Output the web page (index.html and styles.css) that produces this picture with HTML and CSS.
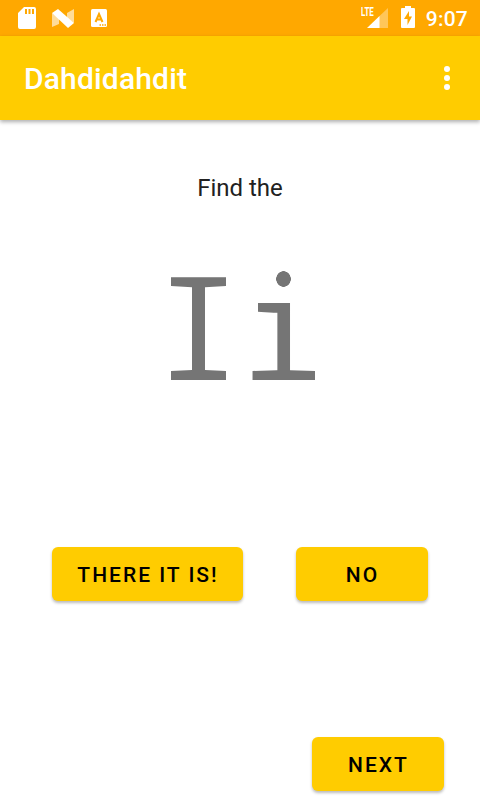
FILE: index.html
```html
<!DOCTYPE html>
<html lang="en">
<head>
<meta charset="utf-8">
<title>Dahdidahdit</title>
<link rel="stylesheet" href="styles.css">
</head>
<body>
<div class="status">
  <svg class="sd" width="18" height="22" viewBox="0 0 18 22"><path fill="#fff" fill-rule="evenodd" d="M6 0H16Q18 0 18 2V20Q18 22 16 22H2Q0 22 0 20V6ZM7 2V7H9V2ZM10.500 2V7H12.500V2ZM14 2V7H16V2Z"/></svg>
  <svg class="nougat" width="22" height="19" viewBox="0 0 22 19"><path fill="#fff" opacity=".6" d="M0 4 7 9V15L0 18ZM22 0V14L15 9V4Z"/><path fill="#fff" d="M0 4 6 0 22 14 16 19Z"/></svg>
  <svg class="keyboard" width="16" height="18" viewBox="0 0 16 18"><rect width="16" height="18" rx="1.500" fill="#fff"/><path fill="none" stroke="#ffa800" stroke-width="2" d="M4.500 13 8 5 11.500 13M5.500 10.500H10.500"/><path stroke="#ffa800" stroke-width="1.500" stroke-dasharray="1.500 1" d="M8.500 16H15"/></svg>
  <span class="space"></span>
  <div class="signal">
    <svg width="21" height="20" viewBox="0 0 21 20"><path fill="#fff" opacity=".35" d="M21 0V20H12V8.500Z"/><path fill="#fff" d="M12.500 8V20H0Z"/></svg>
    <span class="lte">LTE</span>
  </div>
  <svg class="battery" width="14" height="22" viewBox="0 0 14 22"><path fill="#fff" d="M4 0H10V2H13Q14 2 14 3V21Q14 22 13 22H1Q0 22 0 21V3Q0 2 1 2H4Z"/><path fill="#ffa800" d="M8 5 3 13H6.500V19L11 10.500H8Z"/></svg>
  <span class="time">9:07</span>
</div>
<header class="appbar">
  <h1>Dahdidahdit</h1>
  <svg width="6" height="24" viewBox="0 0 6 24" fill="#fff"><circle cx="3" cy="3" r="3"/><circle cx="3" cy="12" r="3"/><circle cx="3" cy="21" r="3"/></svg>
</header>
<main>
  <p class="prompt">Find the</p>
  <div class="letter"><span class="upper">I</span><span class="lower">i</span></div>
  <div class="answers">
    <button class="btn wide">THERE IT IS!</button>
    <button class="btn">NO</button>
  </div>
  <button class="btn next">NEXT</button>
</main>
</body>
</html>
```
FILE: styles.css
```css
* { box-sizing: border-box; }
body {
  margin: 0;
  height: 800px;
  overflow: hidden;
  display: flex;
  flex-direction: column;
  background: #fff;
  font-family: Roboto, "Liberation Sans", sans-serif;
}
svg { display: block; flex: none; }
.status {
  height: 36px;
  flex: none;
  display: flex;
  align-items: flex-start;
  padding: 7px 12px 0 18px;
  background: #ffa800;
  color: #fff;
}
.nougat { margin: 2px 0 0 16px; }
.keyboard { margin: 2px 0 0 17px; }
.space { flex: 1; }
.signal { position: relative; margin: 1px 13px 0 0; }
.lte {
  position: absolute;
  left: -6px;
  top: -2px;
  font-size: 12px;
  line-height: 13px;
  font-weight: 700;
  transform: scaleX(.66);
  transform-origin: left;
}
.battery { margin: -1px 11px 0 0; }
.time { font-size: 21px; line-height: 24px; font-weight: 500; letter-spacing: .2px; }
.appbar {
  height: 84px;
  flex: none;
  display: flex;
  align-items: center;
  justify-content: space-between;
  padding: 0 30px 0 24px;
  background: #fc0;
  color: #fff;
  box-shadow: 0 2px 4px rgba(0, 0, 0, .32);
}
h1 { margin: 0; padding-top: 2px; font-size: 30px; line-height: 36px; font-weight: 500; letter-spacing: .17px; }
main { flex: 1; display: flex; flex-direction: column; }
.prompt {
  margin: 52px 0 0;
  font-size: 24px;
  line-height: 32px;
  text-align: center;
  color: #212121;
}
.letter {
  display: flex;
  justify-content: center;
  margin-top: 43px;
  height: 168px;
  font-family: "DejaVu Sans Mono", monospace;
  font-size: 141px;
  line-height: 168px;
  color: #757575;
}
/* Tapered slab serifs */
.upper {
  transform: translateX(1px);
  clip-path: polygon(14.900px 30px, 69.900px 30px, 69.900px 39px, 48.900px 40.200px, 48.900px 123px, 69.900px 124px, 69.900px 133px, 14.900px 133px, 14.900px 124px, 35.900px 123px, 35.900px 40.200px, 14.900px 39px);
}
.lower {
  position: relative;
  clip-path: polygon(30px 20px, 60px 20px, 60px 50px, 50.200px 56px, 50.200px 123px, 75px 124px, 75px 133px, 12.400px 133px, 12.400px 124px, 37px 123px, 37px 66.200px, 18px 64.700px, 18px 56px, 30px 56px);
}
/* Round dot over the square one */
.lower::before {
  content: "";
  position: absolute;
  left: 33px;
  top: 22px;
  width: 21px;
  height: 22px;
  background: radial-gradient(ellipse 7.500px 8px at 10.500px 10px, #757575 94%, #fff 100%);
}
.answers {
  display: flex;
  justify-content: space-between;
  margin: 132px 52px 0;
}
.btn {
  width: 132px;
  height: 54px;
  padding: 2px 0 0 1px;
  border: 0;
  border-radius: 6px;
  background: #fc0;
  color: #000;
  font: 500 21px/52px Roboto, "Liberation Sans", sans-serif;
  letter-spacing: 2px;
  white-space: nowrap;
  box-shadow: 0 2px 3px rgba(0, 0, 0, .27);
}
.wide { width: 191px; }
.next { align-self: flex-end; margin: 136px 36px 0 0; }
```
